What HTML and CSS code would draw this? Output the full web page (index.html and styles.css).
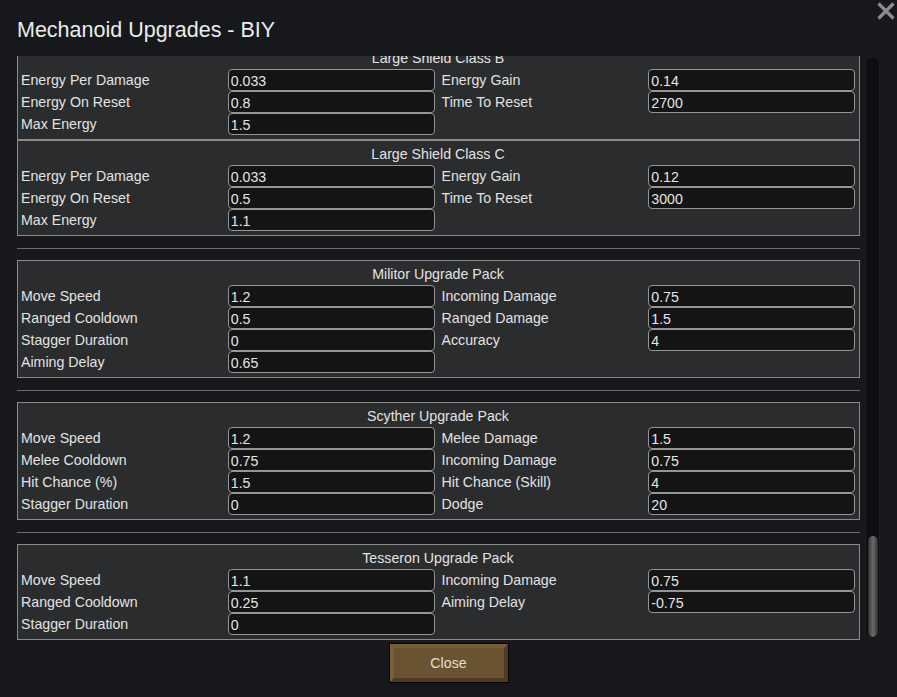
FILE: index.html
```html
<!DOCTYPE html>
<html>
<head>
  <title>Mechanoid Upgrades - BIY</title>
  <link rel="stylesheet" href="styles.css">
</head>
<body>
  <div class="dialog">
    <button class="close-x" title="Close">
      <svg width="20" height="20" viewBox="0 0 20 20">
        <path d="M2.5 2.5 L17.5 17.5 M17.5 2.5 L2.5 17.5" stroke="#8c8c8c" stroke-width="3.2" fill="none"/>
      </svg>
    </button>

    <h1 class="dialog-title">Mechanoid Upgrades - BIY</h1>

    <div class="dialog-body">
      <div class="scroll-view">
        <div class="scroll-content">

          <div class="group">
            <section class="pack">
              <div class="pack-title">Large Shield Class B</div>
              <div class="fields">
                <div class="field"><span>Energy Per Damage</span><input type="text" value="0.033"></div>
                <div class="field"><span>Energy Gain</span><input type="text" value="0.14"></div>
                <div class="field"><span>Energy On Reset</span><input type="text" value="0.8"></div>
                <div class="field"><span>Time To Reset</span><input type="text" value="2700"></div>
                <div class="field"><span>Max Energy</span><input type="text" value="1.5"></div>
              </div>
            </section>
            <section class="pack">
              <div class="pack-title">Large Shield Class C</div>
              <div class="fields">
                <div class="field"><span>Energy Per Damage</span><input type="text" value="0.033"></div>
                <div class="field"><span>Energy Gain</span><input type="text" value="0.12"></div>
                <div class="field"><span>Energy On Reset</span><input type="text" value="0.5"></div>
                <div class="field"><span>Time To Reset</span><input type="text" value="3000"></div>
                <div class="field"><span>Max Energy</span><input type="text" value="1.1"></div>
              </div>
            </section>
          </div>

          <div class="separator"></div>

          <div class="group">
            <section class="pack">
              <div class="pack-title">Militor Upgrade Pack</div>
              <div class="fields">
                <div class="field"><span>Move Speed</span><input type="text" value="1.2"></div>
                <div class="field"><span>Incoming Damage</span><input type="text" value="0.75"></div>
                <div class="field"><span>Ranged Cooldown</span><input type="text" value="0.5"></div>
                <div class="field"><span>Ranged Damage</span><input type="text" value="1.5"></div>
                <div class="field"><span>Stagger Duration</span><input type="text" value="0"></div>
                <div class="field"><span>Accuracy</span><input type="text" value="4"></div>
                <div class="field"><span>Aiming Delay</span><input type="text" value="0.65"></div>
              </div>
            </section>
          </div>

          <div class="separator"></div>

          <div class="group">
            <section class="pack">
              <div class="pack-title">Scyther Upgrade Pack</div>
              <div class="fields">
                <div class="field"><span>Move Speed</span><input type="text" value="1.2"></div>
                <div class="field"><span>Melee Damage</span><input type="text" value="1.5"></div>
                <div class="field"><span>Melee Cooldown</span><input type="text" value="0.75"></div>
                <div class="field"><span>Incoming Damage</span><input type="text" value="0.75"></div>
                <div class="field"><span>Hit Chance (%)</span><input type="text" value="1.5"></div>
                <div class="field"><span>Hit Chance (Skill)</span><input type="text" value="4"></div>
                <div class="field"><span>Stagger Duration</span><input type="text" value="0"></div>
                <div class="field"><span>Dodge</span><input type="text" value="20"></div>
              </div>
            </section>
          </div>

          <div class="separator"></div>

          <div class="group">
            <section class="pack">
              <div class="pack-title">Tesseron Upgrade Pack</div>
              <div class="fields">
                <div class="field"><span>Move Speed</span><input type="text" value="1.1"></div>
                <div class="field"><span>Incoming Damage</span><input type="text" value="0.75"></div>
                <div class="field"><span>Ranged Cooldown</span><input type="text" value="0.25"></div>
                <div class="field"><span>Aiming Delay</span><input type="text" value="-0.75"></div>
                <div class="field"><span>Stagger Duration</span><input type="text" value="0"></div>
              </div>
            </section>
          </div>

        </div>
      </div>

      <div class="scrollbar">
        <div class="scroll-thumb"></div>
      </div>
    </div>

    <div class="dialog-footer">
      <button class="btn-close">Close</button>
    </div>
  </div>
</body>
</html>
```

FILE: styles.css
```css
* {
  margin: 0;
  padding: 0;
  box-sizing: border-box;
}

html, body {
  width: 100%;
  height: 100%;
  overflow: hidden;
}

body {
  font-family: 'Liberation Sans', Arial, sans-serif;
  background-color: #16181c;
  color: #e2e2e2;
  font-size: 14.2px;
}

.dialog {
  position: relative;
  width: 100%;
  height: 100%;
  display: flex;
  flex-direction: column;
  padding: 0 17px 0 17px;
}

.close-x {
  position: absolute;
  top: 1px;
  right: 1px;
  width: 20px;
  height: 20px;
  background: none;
  border: none;
  cursor: pointer;
}

.close-x svg {
  display: block;
}

.dialog-title {
  font-size: 21.5px;
  font-weight: normal;
  line-height: 24px;
  margin-top: 18px;
  height: 38px;
  color: #ececec;
}

/* Scroll area + custom scrollbar */
.dialog-body {
  display: flex;
  gap: 5px;
  height: 584px;
}

.scroll-view {
  width: 844px;
  height: 100%;
  overflow: hidden;
  display: flex;
  flex-direction: column;
  justify-content: flex-end;
}

.scroll-content {
  display: flex;
  flex-direction: column;
}

.scrollbar {
  width: 15px;
  height: 583px;
  background: #0c0e11;
  border: 1px solid #1d2024;
  border-radius: 8px;
  display: flex;
  flex-direction: column;
  justify-content: flex-end;
  padding: 0 0 0 1px;
}

.scroll-thumb {
  width: 12px;
  height: 103px;
  border-radius: 6px;
  border: 1px solid #0a0a0a;
  background: linear-gradient(90deg, #2e2e2e 0%, #4d4d4d 25%, #6a6a6a 50%, #4d4d4d 75%, #2e2e2e 100%);
}

.separator {
  height: 1px;
  background: #6a6b6d;
  margin: 12px 0 11px 0;
}

/* Upgrade pack boxes */
.pack {
  background: #2b2c2e;
  border: 1px solid #8a8a8a;
  padding: 0 4px 4px 3px;
}

.pack-title {
  text-align: center;
  line-height: 22px;
  height: 24px;
  padding-top: 2px;
}

.fields {
  display: grid;
  grid-template-columns: 1fr 1fr;
  column-gap: 7px;
}

.field {
  display: grid;
  grid-template-columns: 1fr 1fr;
  height: 22px;
  align-items: center;
}

.field span {
  line-height: 22px;
  white-space: nowrap;
}

.field input {
  width: 100%;
  height: 22px;
  background: #141414;
  border: 1px solid #959595;
  border-radius: 4px;
  color: #e4e4e4;
  font-family: inherit;
  font-size: 14.2px;
  padding: 1px 0 0 2px;
  outline: none;
}

.dialog-footer {
  display: flex;
  justify-content: center;
  padding-top: 4px;
}

.btn-close {
  width: 118px;
  height: 38px;
  background: #6a5331;
  border: 4px solid;
  border-color: #775e37 #4d3b21 #4d3b21 #775e37;
  box-shadow: 0 0 0 1px #050505;
  color: #e6dfd2;
  font-family: inherit;
  font-size: 14.2px;
  cursor: pointer;
}
```
